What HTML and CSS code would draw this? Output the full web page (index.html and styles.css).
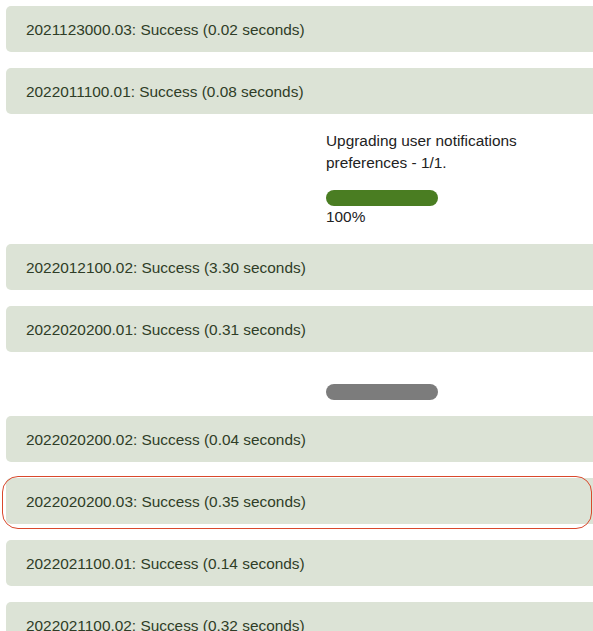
FILE: index.html
```html
<!DOCTYPE html>
<html lang="en">
<head>
  <meta charset="UTF-8">
  <meta name="viewport" content="width=device-width, initial-scale=1.0">
  <title>Upgrade steps</title>
  <link rel="stylesheet" href="styles.css">
</head>
<body>
  <div class="log">
    <div class="step">2021123000.03: Success (0.02 seconds)</div>
    <div class="step">2022011100.01: Success (0.08 seconds)</div>
    <div class="progress">
      <p class="progress-label">Upgrading user notifications<br>preferences - 1/1.</p>
      <div class="bar bar-done"></div>
      <p class="progress-pct">100%</p>
    </div>
    <div class="step">2022012100.02: Success (3.30 seconds)</div>
    <div class="step">2022020200.01: Success (0.31 seconds)</div>
    <div class="progress progress-idle">
      <div class="bar bar-idle"></div>
    </div>
    <div class="step">2022020200.02: Success (0.04 seconds)</div>
    <div class="step step-marked">2022020200.03: Success (0.35 seconds)</div>
    <div class="step">2022021100.01: Success (0.14 seconds)</div>
    <div class="step">2022021100.02: Success (0.32 seconds)</div>
  </div>
</body>
</html>
```

FILE: styles.css
```css
* {
  margin: 0;
  padding: 0;
  box-sizing: border-box;
}

html, body {
  height: 100%;
  overflow: hidden;
  background: #fff;
  font-family: 'Liberation Sans', Arial, sans-serif;
}

.log {
  padding: 6px 0 0 6px;
  width: 620px;
}

.step {
  position: relative;
  height: 46px;
  margin-bottom: 16px;
  padding: 2px 20px 0;
  display: flex;
  align-items: center;
  background: #dce3d6;
  border-radius: 5px;
  color: #2f3d27;
  font-size: 15.4px;
}

/* hand-drawn highlight round one row */
.step-marked::after {
  content: "";
  position: absolute;
  top: -2px;
  bottom: -5px;
  left: -4px;
  width: 588px;
  border: 1.5px solid #d9482c;
  border-radius: 16px;
}

.progress {
  padding-left: 320px;
  margin-bottom: 16px;
  color: #222;
  font-size: 15.4px;
  line-height: 22px;
}

.progress-idle {
  padding-top: 16px;
}

.bar {
  width: 112px;
  height: 16px;
  border-radius: 8px;
}

.progress-label {
  margin-bottom: 16px;
}

.bar-done {
  background: #4a7d22;
}

.bar-idle {
  background: #7c7c7c;
}
```
